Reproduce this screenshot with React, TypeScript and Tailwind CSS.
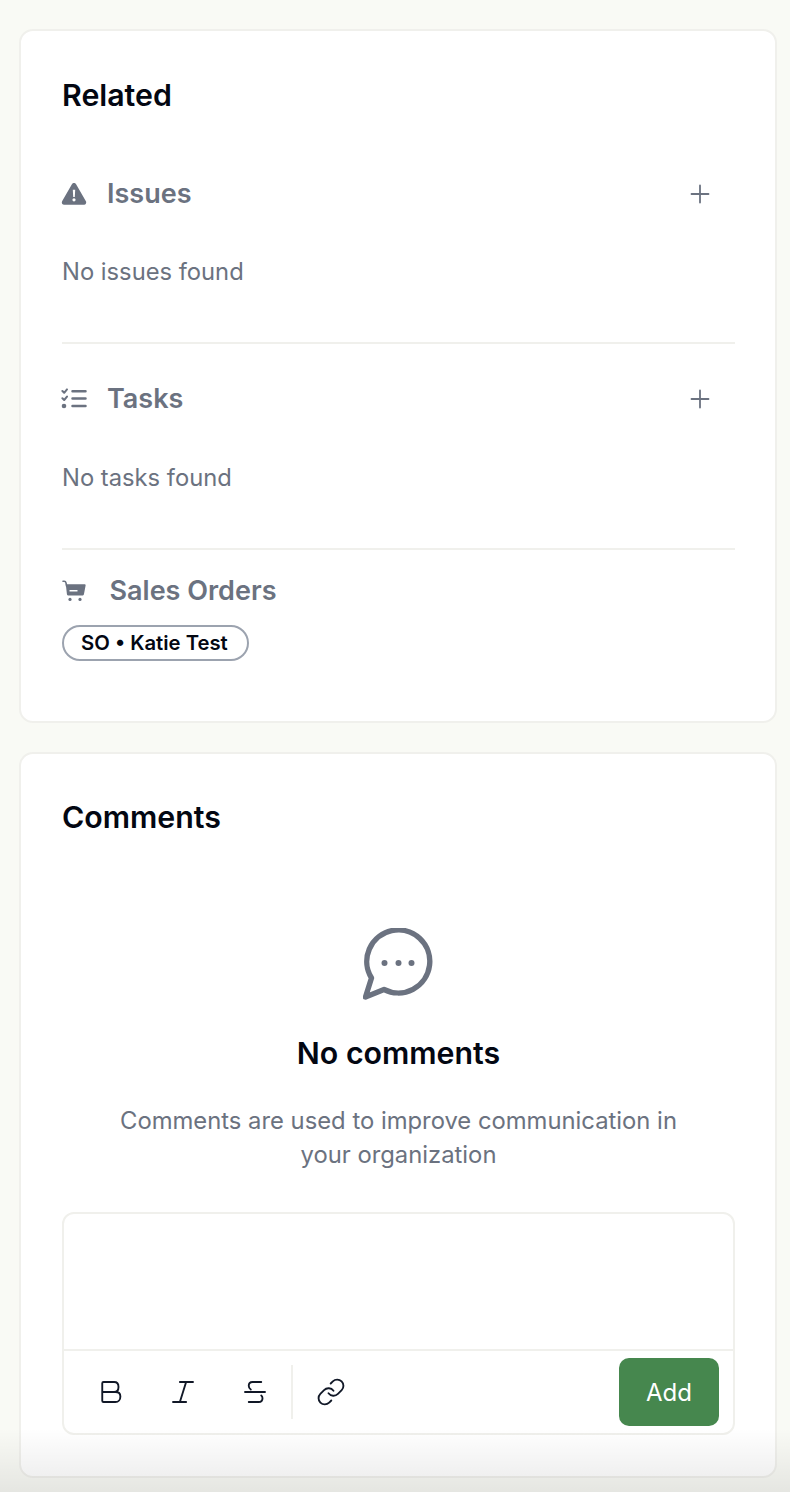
const PlusIcon = () => (
    <svg width="24" height="24" viewBox="0 0 24 24" fill="none" stroke="#6b7280" strokeWidth="1.8" strokeLinecap="round">
        <path d="M12 3.5V20.5M3.5 12H20.5" />
    </svg>
)

const WarningIcon = () => (
    <svg className="-ml-px" width="26" height="24" viewBox="0 0 26 24">
        <path fillRule="evenodd" fill="#6b7280" d="M10.9 2.2C11.8.6 14.2.6 15.1 2.2L24.9 19.2C25.8 20.8 24.6 22.8 22.8 22.8H3.2C1.4 22.8.2 20.8 1.1 19.2L10.9 2.2ZM11.8 7.8H14.2L13.8 15H12.2L11.8 7.8ZM13 16.2A1.6 1.6 0 1 1 13 19.4A1.6 1.6 0 1 1 13 16.2Z" />
    </svg>
)

const TasksIcon = () => (
    <svg className="-ml-px" width="26" height="22" viewBox="0 0 26 22" fill="none" stroke="#6b7280" strokeLinecap="round" strokeLinejoin="round">
        <path strokeWidth="2" d="M1.4 3L3.2 4.8L6 1.4M1.4 10.2L3.2 12L6 8.6" />
        <path strokeWidth="2.5" d="M11.5 3.2H24.5M11.5 10.6H24.5M11.5 18H24.5" />
        <circle cx="3" cy="18" r="2.3" fill="#6b7280" stroke="none" />
    </svg>
)

const CartIcon = () => (
    <svg width="24" height="22" viewBox="0 0 24 22">
        <path fill="none" stroke="#6b7280" strokeWidth="1.6" strokeLinecap="round" d="M1 1.2H2.2C3.2 1.2 3.8 1.8 4 2.8L4.6 6" />
        <path fillRule="evenodd" fill="#6b7280" d="M3.8 4.2H22.6C23.4 4.2 23.8 4.8 23.6 5.6L22 14C21.8 15 21 15.6 20 15.6H6.8C5.8 15.6 5 15 4.9 14L3.8 4.2ZM7.5 10V11.6H15.5V10H7.5Z" />
        <circle cx="8" cy="19.4" r="1.6" fill="#6b7280" />
        <circle cx="18" cy="19.4" r="1.6" fill="#6b7280" />
    </svg>
)

const CommentIcon = () => (
    <svg width="72" height="72" viewBox="0 0 72 72" fill="none" stroke="#6b7280" strokeWidth="5.4" strokeLinecap="round" strokeLinejoin="round">
        <path d="M21 61.5A31.5 31.5 0 1 0 8.5 50L2.5 69Z" />
        <circle cx="21.5" cy="35" r="3" fill="#6b7280" stroke="none" />
        <circle cx="35.5" cy="35" r="3" fill="#6b7280" stroke="none" />
        <circle cx="48.5" cy="35" r="3" fill="#6b7280" stroke="none" />
    </svg>
)

const BoldIcon = () => (
    <svg width="30" height="30" viewBox="0 0 24 24" fill="none" stroke="#111827" strokeWidth="1.5" strokeLinecap="round" strokeLinejoin="round">
        <path d="M5 12H15.5C18 12 19.5 13.5 19.5 15.5C19.5 18 18 20 15.5 20H6C5.4 20 5 19.6 5 19V5C5 4.4 5.4 4 6 4H14.5C16.8 4 18 5.6 18 8C18 10.2 16.8 12 14.5 12" />
    </svg>
)

const ItalicIcon = () => (
    <svg width="30" height="30" viewBox="0 0 24 24" fill="none" stroke="#111827" strokeWidth="1.5" strokeLinecap="round">
        <path d="M9.5 4H20M4 20H14.5M14.5 4L9.5 20" />
    </svg>
)

const StrikeIcon = () => (
    <svg width="30" height="30" viewBox="0 0 24 24" fill="none" stroke="#111827" strokeWidth="1.5" strokeLinecap="round" strokeLinejoin="round">
        <path d="M4 12H20M17 4H10C8 4 7 5.2 7 7C7 8.4 7.6 9.4 8.6 10M7 20H15C17 20 18 18.8 18 17C18 16 17.7 15.3 17 14.8" />
    </svg>
)

const LinkIcon = () => (
    <svg width="30" height="30" viewBox="0 0 24 24" fill="none" stroke="#111827" strokeWidth="1.5" strokeLinecap="round" strokeLinejoin="round">
        <path d="M10 13a5 5 0 0 0 7.54.54l3-3a5 5 0 0 0-7.07-7.07l-1.72 1.71" />
        <path d="M14 11a5 5 0 0 0-7.54-.54l-3 3a5 5 0 0 0 7.07 7.07l1.71-1.71" />
    </svg>
)

const Card = ({ children, className }: { children: React.ReactNode; className: string }) => (
    <div className={`bg-white border-2 border-[#f0f0ec] rounded-[14px] pl-[41px] pr-[40px] ${className}`}>
        {children}
    </div>
)

const App = () => {
    return (
        <div className="relative h-[1492px] overflow-hidden bg-[#f9faf5] pl-[19px] pr-[13px] pt-[29px] font-['Inter',sans-serif]">
            <Card className="h-[694px] pt-[46px]">
                <h2 className="text-[30.3px] leading-[36px] font-semibold text-[#030712]">Related</h2>

                <div className="mt-[63px] flex h-[36px] items-center justify-between pr-[23px]">
                    <div className="flex items-center gap-[20px]">
                        <WarningIcon />
                        <span className="text-[27px] leading-[36px] font-semibold text-[#6b7280]">Issues</span>
                    </div>
                    <PlusIcon />
                </div>
                <p className="mt-[44px] text-[23.75px] leading-[32px] text-[#6b7280]">No issues found</p>
                <div className="mt-[54px] border-t-2 border-[#f0f0ec]" />

                <div className="mt-[37px] flex h-[36px] items-center justify-between pr-[23px]">
                    <div className="flex items-center gap-[20px]">
                        <TasksIcon />
                        <span className="text-[27px] leading-[36px] font-semibold text-[#6b7280]">Tasks</span>
                    </div>
                    <PlusIcon />
                </div>
                <p className="mt-[45px] text-[23.75px] leading-[32px] text-[#6b7280]">No tasks found</p>
                <div className="mt-[54px] border-t-2 border-[#f0f0ec]" />

                <div className="mt-[23px] flex h-[36px] items-center gap-[23.5px]">
                    <CartIcon />
                    <span className="text-[27px] leading-[36px] font-semibold text-[#6b7280]">Sales Orders</span>
                </div>
                <div className="mt-[16px] flex">
                    <span className="rounded-full border-2 border-[#9ca3af] pl-[17px] pr-[19px] py-[1px] text-[20.3px] leading-[30px] font-semibold text-[#030712]">
                        SO • Katie Test
                    </span>
                </div>
            </Card>

            <Card className="mt-[29px] h-[726px] pt-[45px]">
                <h2 className="text-[30.3px] leading-[36px] font-semibold text-[#030712]">Comments</h2>

                <div className="mt-[93px] flex flex-col items-center">
                    <CommentIcon />
                    <h3 className="mt-[33px] text-[30.3px] leading-[40px] font-semibold text-[#030712]">No comments</h3>
                    <p className="mt-[31px] w-[600px] text-center text-[23.8px] leading-[34px] text-[#6b7280]">
                        Comments are used to improve communication in your organization
                    </p>
                </div>

                <div className="mt-[40px] rounded-[12px] border-2 border-[#f0f0ec]">
                    <div className="h-[135px]" />
                    <div className="flex h-[84px] items-center justify-between border-t-2 border-[#f0f0ec] pl-[32px] pr-[14px]">
                        <div className="flex items-center">
                            <div className="flex items-center gap-[42px] pr-[21px]">
                                <BoldIcon />
                                <ItalicIcon />
                                <StrikeIcon />
                            </div>
                            <div className="h-[54px] border-l-2 border-[#f0f0ec]" />
                            <div className="pl-[23px]"><LinkIcon /></div>
                        </div>
                        <button className="h-[68px] w-[100px] rounded-[10px] bg-[#46874e] pt-[1px] text-[24px] font-normal text-white">Add</button>
                    </div>
                </div>
            </Card>

            <div className="pointer-events-none absolute inset-x-0 bottom-0 h-[64px] bg-gradient-to-t from-black/8 to-transparent" />
        </div>
    )
}

export default App
